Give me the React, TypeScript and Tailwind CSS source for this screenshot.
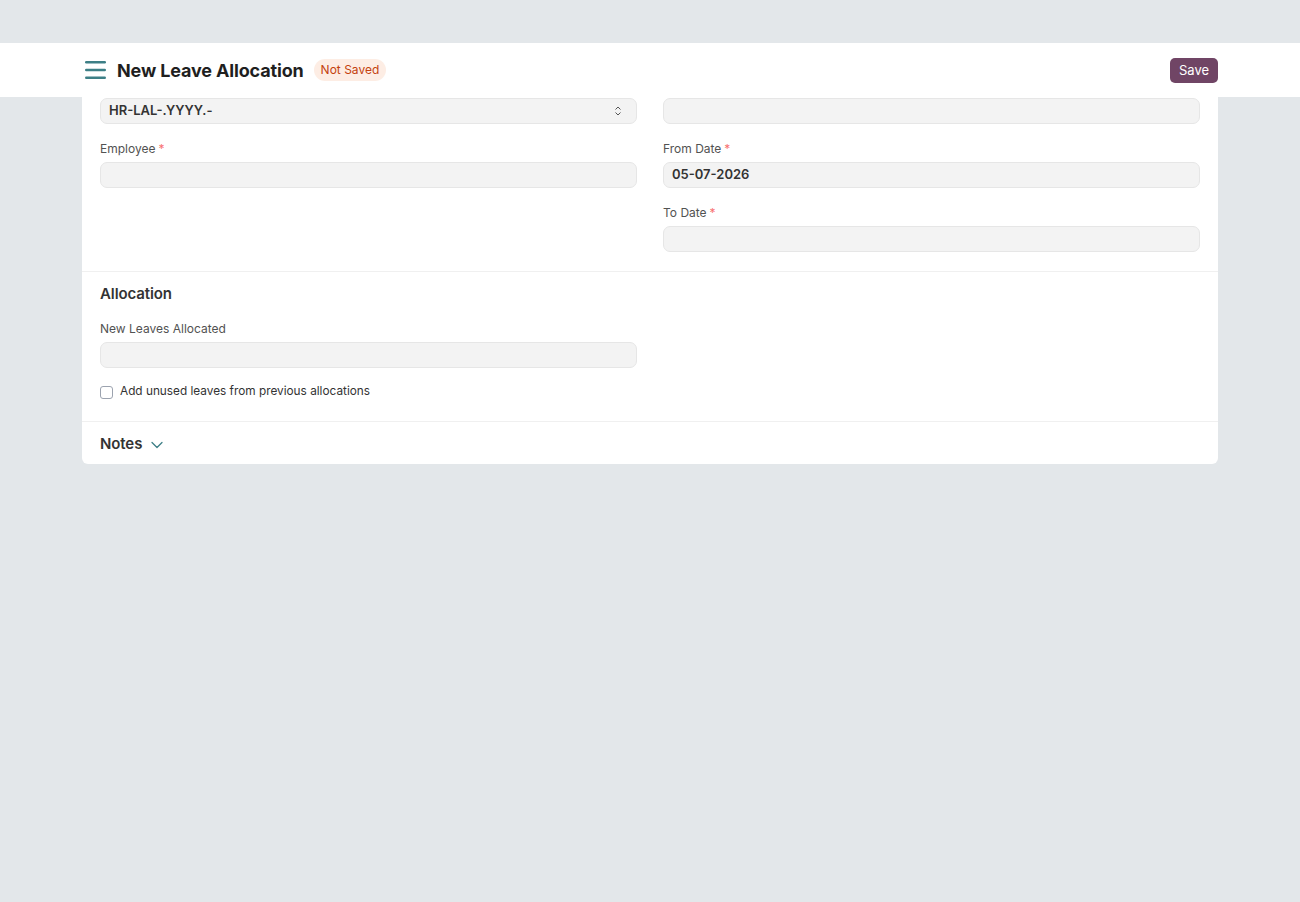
import { ChevronDown } from "lucide-react";

const FONT = { fontFamily: "Inter, 'Noto Sans', sans-serif" };

function Label({ text, required }: { text: string; required?: boolean }) {
  return (
    <div className="mb-[5px] text-[12px] leading-[16px] text-[#525252]">
      {text}
      {required && <span className="ml-[3px] text-[#f87171]">*</span>}
    </div>
  );
}

function Input({ value }: { value?: string }) {
  return (
    <div className="flex h-[26px] items-center rounded-[7px] border border-[#e6e6e6] bg-[#f3f3f3] px-[8px] text-[13px] font-semibold text-[#333]">
      {value}
    </div>
  );
}

export default function App() {
  return (
    <div style={FONT} className="min-h-screen bg-[#e3e7ea]">
      <div className="h-[43px]" />
      <header className="h-[54px] bg-white">
        <div className="mx-auto flex h-full w-[1136px] items-center justify-between pl-[3px]">
          <div className="flex items-center">
            <svg width="21" height="20" viewBox="0 0 21 20" className="mr-[11px]">
              <rect x="0" y="1" width="21" height="2.4" rx="1.2" fill="#3d7f86" />
              <rect x="0" y="8.8" width="21" height="2.4" rx="1.2" fill="#3d7f86" />
              <rect x="0" y="16.6" width="21" height="2.4" rx="1.2" fill="#3d7f86" />
            </svg>
            <h1 className="text-[18px] font-bold tracking-[-0.15px] text-[#1f1f1f]">New Leave Allocation</h1>
            <span className="ml-[10px] rounded-full bg-[#fdede4] px-[7px] py-[2px] text-[12px] text-[#c4420f]">
              Not Saved
            </span>
          </div>
          <button
            type="button"
            className="h-[25px] w-[48px] rounded-[5px] bg-[#704565] pt-[1px] text-[13px] text-white"
          >
            Save
          </button>
        </div>
      </header>

      <div className="mx-auto w-[1136px] rounded-b-[6px] bg-white">
        <section className="border-b border-[#f0f0f0] px-[18px] pb-[19px] pt-[1px]">
          <div className="grid grid-cols-2 gap-x-[26px]">
            <div className="space-y-[17px]">
              <div className="flex h-[26px] items-center justify-between rounded-[7px] border border-[#e6e6e6] bg-[#f3f3f3] px-[8px] text-[13px] font-semibold text-[#333]">
                HR-LAL-.YYYY.-
                <svg width="8" height="12" viewBox="0 0 8 12" className="mr-[6px]">
                  <path d="M1.5 4.5 L4 2 L6.5 4.5 M1.5 7.5 L4 10 L6.5 7.5" stroke="#555" strokeWidth="1" fill="none" />
                </svg>
              </div>
              <div>
                <Label text="Employee" required />
                <Input />
              </div>
            </div>
            <div className="space-y-[17px]">
              <Input />
              <div>
                <Label text="From Date" required />
                <Input value="05-07-2026" />
              </div>
              <div>
                <Label text="To Date" required />
                <Input />
              </div>
            </div>
          </div>
        </section>

        <section className="border-b border-[#f0f0f0] px-[18px] pb-[21px] pt-[12px]">
          <h2 className="mb-[17px] text-[15px] font-semibold leading-[20px] tracking-[-0.1px] text-[#333]">Allocation</h2>
          <div className="grid grid-cols-2 gap-x-[26px]">
            <div>
              <Label text="New Leaves Allocated" />
              <Input />
              <label className="mt-[16px] flex h-[16px] items-center gap-[7px] text-[11.8px] text-[#333]">
                <span className="h-[13px] w-[13px] rounded-[3px] border border-[#9ca3af] bg-white" />
                Add unused leaves from previous allocations
              </label>
            </div>
          </div>
        </section>

        <section className="flex h-[42px] items-center px-[18px] pt-[2px]">
          <h2 className="text-[15px] font-semibold tracking-[-0.1px] text-[#333]">Notes</h2>
          <ChevronDown className="ml-[5px] mt-[2px] h-[20px] w-[20px] text-[#3d7f86]" strokeWidth={1.5} />
        </section>
      </div>
    </div>
  );
}
